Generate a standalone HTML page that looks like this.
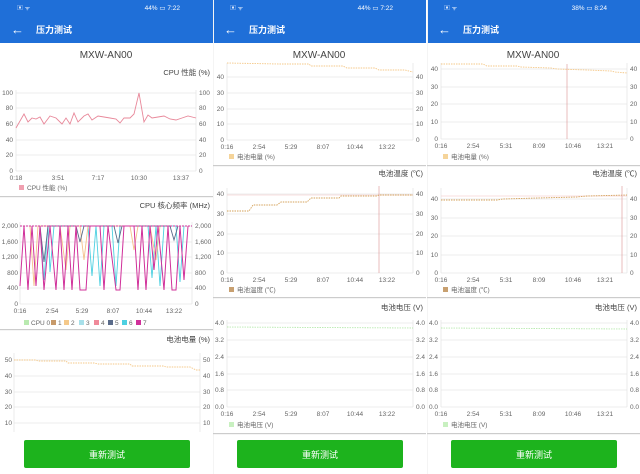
<!DOCTYPE html>
<html><head><meta charset="utf-8"><style>
html,body{margin:0;padding:0;background:#fff;}
svg{display:block;font-family:"Liberation Sans","Noto Sans CJK SC",sans-serif;}
.t{font-size:6.5px;fill:#666;}
.r{text-anchor:end}
.h{font-size:7.5px;fill:#444;}
.g{stroke:#e6e6e6;stroke-width:0.8}
</style></head><body>
<svg width="640" height="474" viewBox="0 0 640 474">
<rect width="640" height="474" fill="#fff"/>
<defs>
<g id="hdr">
<rect x="0" y="0" width="213" height="43" fill="#1f6fd8"/>
<text x="17" y="10" font-size="6" fill="#dce8fb">▣ ᯤ</text>
<text x="11" y="34" font-size="13" fill="#fff">←</text>
<text x="36" y="33" font-size="9" fill="#fff" font-weight="bold">压力测试</text>
<text x="106" y="58" font-size="10" fill="#444" text-anchor="middle">MXW-AN00</text>
<rect x="24" y="440" width="166" height="28" rx="2" fill="#1db31d"/>
<text x="107" y="458" font-size="9" fill="#fff" text-anchor="middle">重新测试</text>
</g>
</defs>

<!-- PANEL 1 -->
<g>
<use href="#hdr"/>
<text x="180" y="10" font-size="6.5" fill="#fff" text-anchor="end">44% ▭ 7:22</text>
<text x="210" y="75" class="h r">CPU 性能 (%)</text>
<g class="g"><line x1="16" y1="93" x2="196" y2="93"/><line x1="16" y1="108" x2="196" y2="108"/><line x1="16" y1="124" x2="196" y2="124"/><line x1="16" y1="140" x2="196" y2="140"/><line x1="16" y1="155" x2="196" y2="155"/><line x1="16" y1="171" x2="196" y2="171"/><line x1="16" y1="90" x2="16" y2="171"/><line x1="196" y1="90" x2="196" y2="171"/></g>
<g class="t r"><text x="13" y="95">100</text><text x="13" y="110">80</text><text x="13" y="126">60</text><text x="13" y="142">40</text><text x="13" y="157">20</text><text x="13" y="173">0</text></g>
<g class="t"><text x="199" y="95">100</text><text x="199" y="110">80</text><text x="199" y="126">60</text><text x="199" y="142">40</text><text x="199" y="157">20</text><text x="199" y="173">0</text></g>
<polyline fill="none" stroke="#e8889a" stroke-width="0.9" points="16,128 24,114 28,122 32,118 36,119 40,117 44,124 50,116 56,118 62,124 66,118 70,124 74,113 78,122 84,116 88,114 92,120 98,116 104,117 110,118 116,119 120,123 124,118 130,118 134,114 139,93 144,122 148,115 152,118 158,117 164,116 170,119 176,120 182,118 188,116 196,118"/>
<g class="t" text-anchor="middle"><text x="16" y="180">0:18</text><text x="58" y="180">3:51</text><text x="98" y="180">7:17</text><text x="139" y="180">10:30</text><text x="181" y="180">13:37</text></g>
<rect x="19" y="185" width="5" height="5" fill="#f0a0b0"/><text x="27" y="190" class="t">CPU 性能 (%)</text>
<rect x="0" y="196" width="213" height="1.2" fill="#ccc"/>

<text x="210" y="208" class="h r">CPU 核心频率 (MHz)</text>
<g class="g"><line x1="20" y1="226" x2="192" y2="226"/><line x1="20" y1="242" x2="192" y2="242"/><line x1="20" y1="257" x2="192" y2="257"/><line x1="20" y1="273" x2="192" y2="273"/><line x1="20" y1="288" x2="192" y2="288"/><line x1="20" y1="304" x2="192" y2="304"/><line x1="20" y1="222" x2="20" y2="304"/><line x1="192" y1="222" x2="192" y2="304"/></g>
<g class="t r"><text x="18" y="228">2,000</text><text x="18" y="244">1,600</text><text x="18" y="259">1,200</text><text x="18" y="275">800</text><text x="18" y="290">400</text><text x="18" y="306">0</text></g>
<g class="t"><text x="195" y="228">2,000</text><text x="195" y="244">1,600</text><text x="195" y="259">1,200</text><text x="195" y="275">800</text><text x="195" y="290">400</text><text x="195" y="306">0</text></g>
<polyline fill="none" stroke="#4dd0e1" stroke-width="0.9" points="40,226 44,280 48,226 50,272 54,226 88,226 92,276 96,226 100,286 104,226 112,226 116,286 120,226 148,226 152,278 156,226 160,286 164,226 176,226 180,282 184,226"/>
<polyline fill="none" stroke="#f5c08a" stroke-width="0.9" points="30,226 34,286 38,226 60,226 66,270 70,226 80,226 84,260 88,226 130,226 134,250 138,226 150,226 156,260 160,226"/>
<polyline fill="none" stroke="#5a6b8a" stroke-width="0.9" points="40,226 44,262 48,226 76,226 80,242 84,226 114,226 118,243 122,226 170,226 174,240 178,226"/>
<polyline fill="none" stroke="#d0309a" stroke-width="1" points="20,286 24,226 28,290 32,226 36,286 40,226 44,290 50,226 56,290 60,226 64,290 68,226 72,290 76,226 80,290 86,290 90,226 100,226 104,290 108,226 116,290 120,290 124,226 134,226 138,290 142,226 146,290 150,226 154,270 158,226 164,290 168,226 172,290 176,290 180,226 184,280 188,226"/>
<line x1="20" y1="226" x2="192" y2="226" stroke="#d0309a" stroke-width="1" stroke-dasharray="2,1"/>
<g class="t" text-anchor="middle"><text x="20" y="313">0:16</text><text x="52" y="313">2:54</text><text x="82" y="313">5:29</text><text x="113" y="313">8:07</text><text x="144" y="313">10:44</text><text x="174" y="313">13:22</text></g>
<g class="t"><rect x="24" y="320" width="5" height="5" fill="#b9eab0"/><text x="31" y="325">CPU 0</text><rect x="51" y="320" width="5" height="5" fill="#c79a6a"/><text x="58" y="325">1</text><rect x="64" y="320" width="5" height="5" fill="#f5c98a"/><text x="71" y="325">2</text><rect x="79" y="320" width="5" height="5" fill="#a8e0ea"/><text x="86" y="325">3</text><rect x="94" y="320" width="5" height="5" fill="#f08a9a"/><text x="101" y="325">4</text><rect x="108" y="320" width="5" height="5" fill="#5a6b8a"/><text x="115" y="325">5</text><rect x="122" y="320" width="5" height="5" fill="#4dd0e1"/><text x="129" y="325">6</text><rect x="136" y="320" width="5" height="5" fill="#d0309a"/><text x="143" y="325">7</text></g>
<rect x="0" y="329" width="213" height="1.2" fill="#ccc"/>

<text x="210" y="342" class="h r">电池电量 (%)</text>
<g class="g"><line x1="14" y1="360" x2="200" y2="360"/><line x1="14" y1="376" x2="200" y2="376"/><line x1="14" y1="392" x2="200" y2="392"/><line x1="14" y1="407" x2="200" y2="407"/><line x1="14" y1="423" x2="200" y2="423"/><line x1="14" y1="353" x2="14" y2="432"/><line x1="200" y1="353" x2="200" y2="432"/></g>
<g class="t r"><text x="12" y="362">50</text><text x="12" y="378">40</text><text x="12" y="394">30</text><text x="12" y="409">20</text><text x="12" y="425">10</text></g>
<g class="t"><text x="203" y="362">50</text><text x="203" y="378">40</text><text x="203" y="394">30</text><text x="203" y="409">20</text><text x="203" y="425">10</text></g>
<polyline fill="none" stroke="#f5c98a" stroke-width="0.9" stroke-dasharray="1.5,1" points="14,360 36,360 38,361 66,361 68,363 94,363 98,364 130,364 132,366 164,366 166,367 190,367 196,370 200,370"/>
</g>

<g id="p2" transform="translate(213,0)">
<use href="#hdr"/>
<text x="180" y="10" font-size="6.5" fill="#fff" text-anchor="end">44% ▭ 7:22</text>
<rect x="0" y="0" width="1" height="474" fill="#f4f4f4"/>
<g class="g"><line x1="14" y1="77" x2="200" y2="77"/><line x1="14" y1="93" x2="200" y2="93"/><line x1="14" y1="109" x2="200" y2="109"/><line x1="14" y1="124" x2="200" y2="124"/><line x1="14" y1="140" x2="200" y2="140"/><line x1="14" y1="63" x2="14" y2="140"/><line x1="200" y1="63" x2="200" y2="140"/></g>
<g class="t r"><text x="11" y="79">40</text><text x="11" y="95">30</text><text x="11" y="111">20</text><text x="11" y="126">10</text><text x="11" y="142">0</text></g>
<g class="t"><text x="203" y="79">40</text><text x="203" y="95">30</text><text x="203" y="111">20</text><text x="203" y="126">10</text><text x="203" y="142">0</text></g>
<polyline fill="none" stroke="#f5c98a" stroke-width="0.9" stroke-dasharray="1.5,1" points="14,63 66,64 96,64 98,66 130,66 134,68 162,68 166,70 192,70 200,72"/>
<g class="t" text-anchor="middle"><text x="14" y="149">0:16</text><text x="46" y="149">2:54</text><text x="78" y="149">5:29</text><text x="110" y="149">8:07</text><text x="142" y="149">10:44</text><text x="174" y="149">13:22</text></g>
<rect x="16" y="154" width="5" height="5" fill="#f5d49a"/><text x="24" y="159" class="t">电池电量 (%)</text>
<rect x="0" y="165" width="213" height="1.2" fill="#ccc"/>
<text x="210" y="176" class="h r">电池温度 (℃)</text>
<g class="g"><line x1="14" y1="194" x2="200" y2="194"/><line x1="14" y1="214" x2="200" y2="214"/><line x1="14" y1="234" x2="200" y2="234"/><line x1="14" y1="253" x2="200" y2="253"/><line x1="14" y1="273" x2="200" y2="273"/><line x1="14" y1="188" x2="14" y2="273"/><line x1="200" y1="188" x2="200" y2="273"/></g>
<g class="t r"><text x="11" y="196">40</text><text x="11" y="216">30</text><text x="11" y="236">20</text><text x="11" y="255">10</text><text x="11" y="275">0</text></g>
<g class="t"><text x="203" y="196">40</text><text x="203" y="216">30</text><text x="203" y="236">20</text><text x="203" y="255">10</text><text x="203" y="275">0</text></g>
<line x1="14" y1="195" x2="200" y2="195" stroke="#f2c0c0" stroke-width="0.6"/>
<line x1="166" y1="186" x2="166" y2="273" stroke="#e0a0a0" stroke-width="0.7"/>
<polyline fill="none" stroke="#d4a25a" stroke-width="0.9" stroke-dasharray="1.5,1" points="14,211 36,211 40,205 64,205 68,202 94,202 98,198 126,198 128,196 164,196 166,195 200,195"/>
<g class="t" text-anchor="middle"><text x="14" y="282">0:16</text><text x="46" y="282">2:54</text><text x="78" y="282">5:29</text><text x="110" y="282">8:07</text><text x="142" y="282">10:44</text><text x="174" y="282">13:22</text></g>
<rect x="16" y="287" width="5" height="5" fill="#c8a070"/><text x="24" y="292" class="t">电池温度 (℃)</text>
<rect x="0" y="297" width="213" height="1.2" fill="#ccc"/>
<text x="210" y="310" class="h r">电池电压 (V)</text>
<g class="g"><line x1="14" y1="323" x2="200" y2="323"/><line x1="14" y1="340" x2="200" y2="340"/><line x1="14" y1="357" x2="200" y2="357"/><line x1="14" y1="374" x2="200" y2="374"/><line x1="14" y1="390" x2="200" y2="390"/><line x1="14" y1="407" x2="200" y2="407"/><line x1="14" y1="320" x2="14" y2="407"/><line x1="200" y1="320" x2="200" y2="407"/></g>
<g class="t r"><text x="11" y="325">4.0</text><text x="11" y="342">3.2</text><text x="11" y="359">2.4</text><text x="11" y="376">1.6</text><text x="11" y="392">0.8</text><text x="11" y="409">0.0</text></g>
<g class="t"><text x="203" y="325">4.0</text><text x="203" y="342">3.2</text><text x="203" y="359">2.4</text><text x="203" y="376">1.6</text><text x="203" y="392">0.8</text><text x="203" y="409">0.0</text></g>
<line x1="14" y1="327" x2="200" y2="328" stroke="#b9eab0" stroke-width="0.9" stroke-dasharray="1.5,1"/>
<g class="t" text-anchor="middle"><text x="14" y="416">0:16</text><text x="46" y="416">2:54</text><text x="78" y="416">5:29</text><text x="110" y="416">8:07</text><text x="142" y="416">10:44</text><text x="174" y="416">13:22</text></g>
<rect x="16" y="422" width="5" height="5" fill="#c8f0c0"/><text x="24" y="427" class="t">电池电压 (V)</text>
<rect x="0" y="433" width="213" height="1.2" fill="#ccc"/>
</g>

<g transform="translate(427,0)">
<use href="#hdr"/>
<text x="180" y="10" font-size="6.5" fill="#fff" text-anchor="end">38% ▭ 8:24</text>
<rect x="0" y="0" width="1" height="474" fill="#f4f4f4"/>
<g class="g"><line x1="14" y1="69" x2="200" y2="69"/><line x1="14" y1="87" x2="200" y2="87"/><line x1="14" y1="104" x2="200" y2="104"/><line x1="14" y1="122" x2="200" y2="122"/><line x1="14" y1="139" x2="200" y2="139"/><line x1="14" y1="63" x2="14" y2="139"/><line x1="200" y1="63" x2="200" y2="139"/></g>
<g class="t r"><text x="11" y="71">40</text><text x="11" y="89">30</text><text x="11" y="106">20</text><text x="11" y="124">10</text><text x="11" y="141">0</text></g>
<g class="t"><text x="203" y="71">40</text><text x="203" y="89">30</text><text x="203" y="106">20</text><text x="203" y="124">10</text><text x="203" y="141">0</text></g>
<line x1="140" y1="64" x2="140" y2="139" stroke="#e0a0a0" stroke-width="0.7"/>
<polyline fill="none" stroke="#f5c98a" stroke-width="0.9" stroke-dasharray="1.5,1" points="14,64 56,64 60,66 90,66 94,67 124,68 130,69 160,70 184,71 188,72 200,73"/>
<g class="t" text-anchor="middle"><text x="14" y="148">0:16</text><text x="46" y="148">2:54</text><text x="79" y="148">5:31</text><text x="112" y="148">8:09</text><text x="146" y="148">10:46</text><text x="178" y="148">13:21</text></g>
<rect x="16" y="154" width="5" height="5" fill="#f5d49a"/><text x="24" y="159" class="t">电池电量 (%)</text>
<rect x="0" y="165" width="213" height="1.2" fill="#ccc"/>
<text x="210" y="176" class="h r">电池温度 (℃)</text>
<g class="g"><line x1="14" y1="199" x2="200" y2="199"/><line x1="14" y1="218" x2="200" y2="218"/><line x1="14" y1="236" x2="200" y2="236"/><line x1="14" y1="255" x2="200" y2="255"/><line x1="14" y1="273" x2="200" y2="273"/><line x1="14" y1="188" x2="14" y2="273"/><line x1="200" y1="188" x2="200" y2="273"/></g>
<g class="t r"><text x="11" y="201">40</text><text x="11" y="220">30</text><text x="11" y="238">20</text><text x="11" y="257">10</text><text x="11" y="275">0</text></g>
<g class="t"><text x="203" y="201">40</text><text x="203" y="220">30</text><text x="203" y="238">20</text><text x="203" y="257">10</text><text x="203" y="275">0</text></g>
<line x1="14" y1="196" x2="200" y2="196" stroke="#f2c0c0" stroke-width="0.6"/>
<polyline fill="none" stroke="#d4a25a" stroke-width="0.9" stroke-dasharray="1.5,1" points="14,200 70,200 76,199 110,198 150,197 160,196 200,195"/>
<line x1="195" y1="186" x2="195" y2="273" stroke="#e0a0a0" stroke-width="0.7"/>
<g class="t" text-anchor="middle"><text x="14" y="282">0:16</text><text x="46" y="282">2:54</text><text x="79" y="282">5:31</text><text x="112" y="282">8:09</text><text x="146" y="282">10:46</text><text x="178" y="282">13:21</text></g>
<rect x="16" y="287" width="5" height="5" fill="#c8a070"/><text x="24" y="292" class="t">电池温度 (℃)</text>
<rect x="0" y="297" width="213" height="1.2" fill="#ccc"/>
<text x="210" y="310" class="h r">电池电压 (V)</text>
<g class="g"><line x1="14" y1="323" x2="200" y2="323"/><line x1="14" y1="340" x2="200" y2="340"/><line x1="14" y1="357" x2="200" y2="357"/><line x1="14" y1="374" x2="200" y2="374"/><line x1="14" y1="390" x2="200" y2="390"/><line x1="14" y1="407" x2="200" y2="407"/><line x1="14" y1="320" x2="14" y2="407"/><line x1="200" y1="320" x2="200" y2="407"/></g>
<g class="t r"><text x="11" y="325">4.0</text><text x="11" y="342">3.2</text><text x="11" y="359">2.4</text><text x="11" y="376">1.6</text><text x="11" y="392">0.8</text><text x="11" y="409">0.0</text></g>
<g class="t"><text x="203" y="325">4.0</text><text x="203" y="342">3.2</text><text x="203" y="359">2.4</text><text x="203" y="376">1.6</text><text x="203" y="392">0.8</text><text x="203" y="409">0.0</text></g>
<line x1="14" y1="328" x2="200" y2="329" stroke="#b9eab0" stroke-width="0.9" stroke-dasharray="1.5,1"/>
<g class="t" text-anchor="middle"><text x="14" y="416">0:16</text><text x="46" y="416">2:54</text><text x="79" y="416">5:31</text><text x="112" y="416">8:09</text><text x="146" y="416">10:46</text><text x="178" y="416">13:21</text></g>
<rect x="16" y="422" width="5" height="5" fill="#c8f0c0"/><text x="24" y="427" class="t">电池电压 (V)</text>
<rect x="0" y="433" width="213" height="1.2" fill="#ccc"/>
</g>
</svg>
</body></html>
